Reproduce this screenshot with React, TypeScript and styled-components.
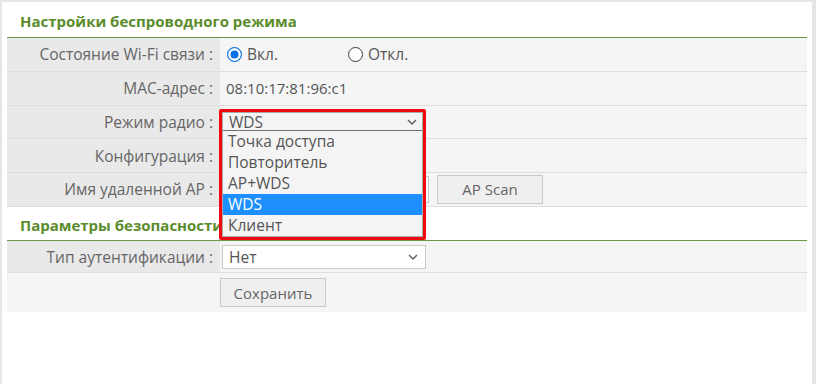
import React from 'react';
import styled, { createGlobalStyle } from 'styled-components';

const GlobalStyle = createGlobalStyle`
  html, body {
    margin: 0;
    padding: 0;
  }
  body {
    background: #e6e6e6;
    font-family: "Open Sans", "Liberation Sans", sans-serif;
    font-size: 15px;
    color: #666;
    overflow: hidden;
  }
`;

const Page = styled.div`
  margin: 2px 4px 0 2px;
  padding: 0 5px;
  min-height: 382px;
  background: #fff;
`;

const SectionTitle = styled.div<{ $first?: boolean }>`
  padding: ${(p) => (p.$first ? '9px 0 6px 13px' : '8px 0 5px 13px')};
  line-height: 20px;
  font-size: 15px;
  font-weight: 700;
  color: #5b8c2b;
  border-bottom: 1px solid #6a9a45;
  white-space: nowrap;
`;

const Row = styled.div<{ $h?: number; $last?: boolean }>`
  display: grid;
  grid-template-columns: 213px 1fr;
  height: ${(p) => p.$h ?? 32.75}px;
  border-bottom: ${(p) => (p.$last ? 'none' : '1px solid #dedede')};
`;

const Label = styled.div<{ $blank?: boolean }>`
  display: flex;
  align-items: center;
  justify-content: flex-end;
  padding-right: 7px;
  line-height: 20px;
  font-size: 15.5px;
  background: ${(p) => (p.$blank ? '#f5f5f5' : '#e9e9e9')};
  white-space: nowrap;
`;

const Value = styled.div<{ $inset?: number }>`
  position: relative;
  display: flex;
  align-items: center;
  gap: 8px;
  padding-left: ${(p) => p.$inset ?? 2}px;
  line-height: 20px;
  background: #f5f5f5;
  color: #555;
`;

const RadioOption = styled.label<{ $w?: number }>`
  display: inline-flex;
  align-items: center;
  gap: 5px;
  min-width: ${(p) => p.$w ?? 0}px;
  font-size: 15.5px;
  color: #555;
`;

const RadioDot = styled.span<{ $on?: boolean }>`
  box-sizing: border-box;
  width: 15px;
  height: 15px;
  border-radius: 50%;
  border: ${(p) => (p.$on ? '1.5px solid #0b6fe6' : '1px solid #3a3a3a')};
  background: ${(p) => (p.$on ? '#0b6fe6' : '#fff')};
  box-shadow: ${(p) => (p.$on ? 'inset 0 0 0 2.5px #fff' : 'none')};
`;

const Select = styled.div`
  box-sizing: border-box;
  width: 204px;
  height: 24px;
  display: flex;
  align-items: center;
  justify-content: space-between;
  padding: 0 7px 0 6px;
  border: 1px solid #c8c8c8;
  background: #fff;
  font-size: 15.5px;
  color: #555;
`;

const TextInput = styled.div`
  box-sizing: border-box;
  width: 207px;
  height: 27px;
  border: 1px solid #c8c8c8;
  background: #fff;
`;

const Button = styled.button`
  box-sizing: border-box;
  width: 106px;
  height: 29px;
  padding: 0;
  border: 1px solid #c9c9c9;
  background: #efefef;
  color: #666;
  font-family: inherit;
  font-size: 15px;
`;

/* opened dropdown with the red highlight frame drawn over the form */
const Callout = styled.div`
  position: absolute;
  left: -1px;
  top: 3.4px;
  z-index: 5;
  box-sizing: border-box;
  width: 207px;
  border: 3.5px solid #f2080f;
  border-radius: 2px;
`;

const ListBox = styled.div`
  border: 1px solid #a8a8a8;
  background: #f4f4f4;
  font-size: 15.5px;
`;

const ListHead = styled.div`
  height: 17.5px;
  display: flex;
  align-items: center;
  justify-content: space-between;
  padding: 0 5px 0 6px;
  border-bottom: 1px solid #6f6f6f;
  color: #555;
`;

const Option = styled.div<{ $active?: boolean }>`
  height: 21px;
  line-height: 21px;
  padding-left: 5px;
  color: ${(p) => (p.$active ? '#fff' : '#555')};
  background: ${(p) => (p.$active ? '#1e8fff' : 'transparent')};
`;

const Chevron = () => (
  <svg width="10" height="6" viewBox="0 0 10 6">
    <polyline points="1,1 5,5 9,1" fill="none" stroke="#666" strokeWidth="1.5" />
  </svg>
);

const modes = ['Точка доступа', 'Повторитель', 'AP+WDS', 'WDS', 'Клиент'];

export default function App() {
  return (
    <>
      <GlobalStyle />
      <Page>
        <SectionTitle $first>Настройки беспроводного режима</SectionTitle>
        <Row>
          <Label>Состояние Wi-Fi связи :</Label>
          <Value $inset={7}>
            <RadioOption $w={113}>
              <RadioDot $on />
              Вкл.
            </RadioOption>
            <RadioOption>
              <RadioDot />
              Откл.
            </RadioOption>
          </Value>
        </Row>
        <Row>
          <Label>MAC-адрес :</Label>
          <Value $inset={6}>08:10:17:81:96:c1</Value>
        </Row>
        <Row>
          <Label>Режим радио :</Label>
          <Value>
            <Callout>
              <ListBox>
                <ListHead>
                  WDS
                  <Chevron />
                </ListHead>
                {modes.map((m) => (
                  <Option key={m} $active={m === 'WDS'}>
                    {m}
                  </Option>
                ))}
              </ListBox>
            </Callout>
          </Value>
        </Row>
        <Row>
          <Label>Конфигурация :</Label>
          <Value />
        </Row>
        <Row>
          <Label>Имя удаленной AP :</Label>
          <Value>
            <TextInput />
            <Button>AP Scan</Button>
          </Value>
        </Row>
        <SectionTitle>Параметры безопасности</SectionTitle>
        <Row $h={31.7}>
          <Label>Тип аутентификации :</Label>
          <Value>
            <Select>
              Нет
              <Chevron />
            </Select>
          </Value>
        </Row>
        <Row $h={38.7} $last>
          <Label $blank />
          <Value $inset={0}>
            <Button>Сохранить</Button>
          </Value>
        </Row>
      </Page>
    </>
  );
}
